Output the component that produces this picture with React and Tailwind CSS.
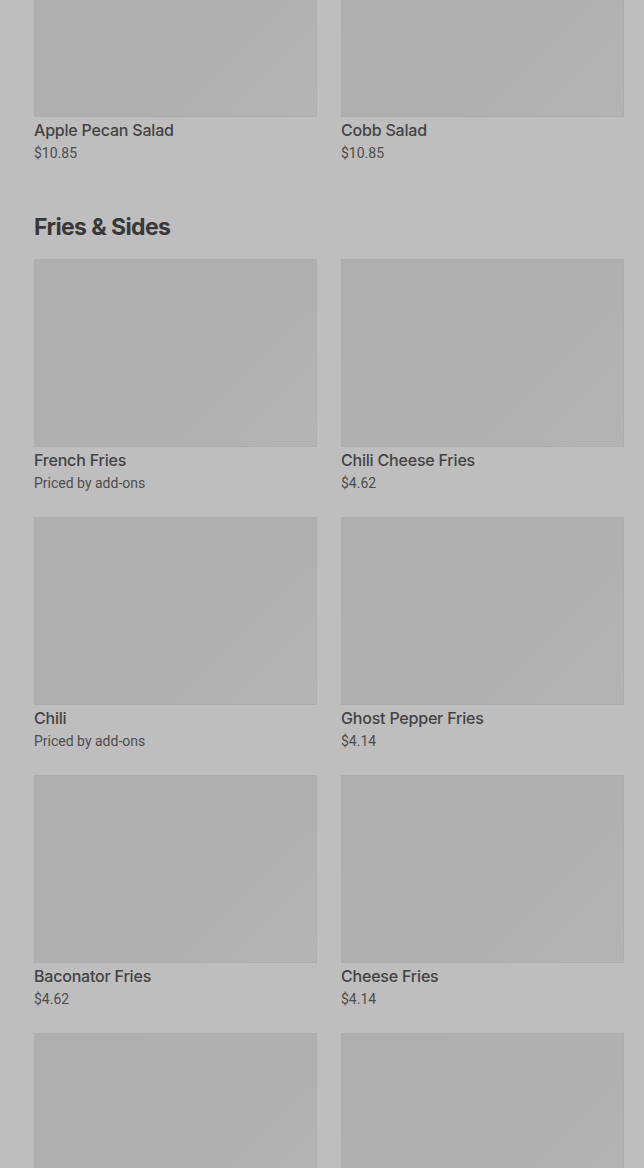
import React from 'react';

const salads = [
    { name: 'Apple Pecan Salad', price: '$10.85' },
    { name: 'Cobb Salad', price: '$10.85' },
];

const sides = [
    { name: 'French Fries', price: 'Priced by add-ons' },
    { name: 'Chili Cheese Fries', price: '$4.62' },
    { name: 'Chili', price: 'Priced by add-ons' },
    { name: 'Ghost Pepper Fries', price: '$4.14' },
    { name: 'Baconator Fries', price: '$4.62' },
    { name: 'Cheese Fries', price: '$4.14' },
    // next row only shows its pictures in the viewport
    { name: null, price: null },
    { name: null, price: null },
];

const MenuItem = ({ item }) => (
    <div className="flex flex-col">
        <div className="h-[188px] w-full bg-[linear-gradient(135deg,#afafaf_0%,#b0b0b0_60%,#b4b4b4_100%)] shadow-[inset_0_0_0_1px_#adadad]" />
        {item.name && (
            <>
                <div className="mt-[1px] text-[16px] leading-[24px] font-medium tracking-[-0.2px] text-[#434343]">{item.name}</div>
                <div className="font-['Roboto',sans-serif] text-[14px] leading-[22px] text-[#4d4d4d]">{item.price}</div>
            </>
        )}
    </div>
);

const App = () => {
    return (
        <div className="bg-[#bebebe] h-[1168px] overflow-hidden font-['Inter','Roboto',sans-serif]">
            <div className="pl-[34px] pr-[20px] -mt-[71px]">
                <div className="grid grid-cols-2 gap-x-[24px]">
                    {salads.map((item) => (
                        <MenuItem key={item.name} item={item} />
                    ))}
                </div>

                <h2 className="mt-[49px] mb-[18px] text-[23px] leading-[28px] font-bold tracking-[-0.6px] text-[#383838]">
                    Fries &amp; Sides
                </h2>

                <div className="grid grid-cols-2 gap-x-[24px] gap-y-[23px]">
                    {sides.map((item, i) => (
                        <MenuItem key={i} item={item} />
                    ))}
                </div>
            </div>
        </div>
    );
};

export default App;
